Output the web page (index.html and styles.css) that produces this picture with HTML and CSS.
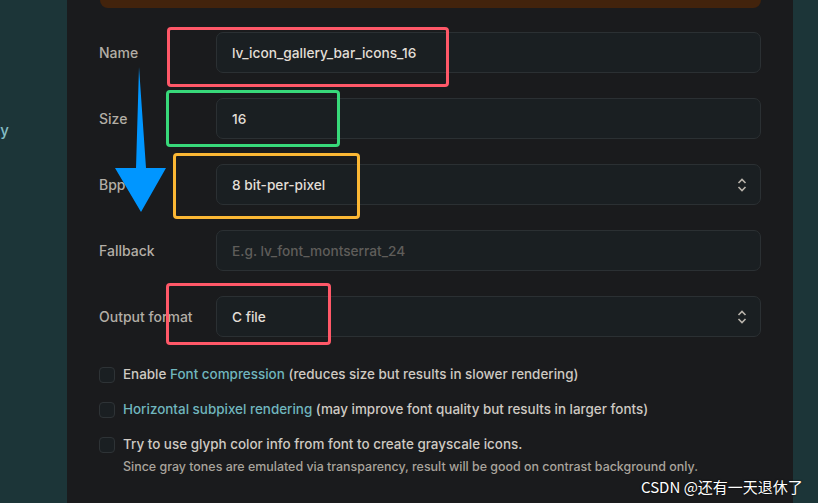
FILE: index.html
```html
<!DOCTYPE html>
<html lang="en">
<head>
  <meta charset="UTF-8">
  <meta name="viewport" content="width=device-width, initial-scale=1.0">
  <title>Font converter</title>
  <link rel="stylesheet" href="styles.css">
</head>
<body>

  <!-- Sidebar -->
  <div class="sidebar">
    <div class="nav-item">Icon gallery</div>
  </div>

  <!-- Main panel -->
  <div class="panel">
    <div class="banner"></div>

    <div class="form">
      <label class="label">Name</label>
      <div class="field">lv_icon_gallery_bar_icons_16</div>

      <label class="label">Size</label>
      <div class="field">16</div>

      <label class="label">Bpp</label>
      <div class="field select">
        <span>8 bit-per-pixel</span>
        <svg class="chevrons" width="10" height="14" viewBox="0 0 10 14"><path d="M1.5 5 L5 1.5 L8.5 5 M1.5 9 L5 12.5 L8.5 9" fill="none" stroke="#b9b4ac" stroke-width="1.6"/></svg>
      </div>

      <label class="label">Fallback</label>
      <div class="field placeholder">E.g. lv_font_montserrat_24</div>

      <label class="label">Output format</label>
      <div class="field select">
        <span>C file</span>
        <svg class="chevrons" width="10" height="14" viewBox="0 0 10 14"><path d="M1.5 5 L5 1.5 L8.5 5 M1.5 9 L5 12.5 L8.5 9" fill="none" stroke="#b9b4ac" stroke-width="1.6"/></svg>
      </div>
    </div>

    <div class="options">
      <div class="option">
        <span class="check"></span>
        <p>Enable <a href="#">Font compression</a> (reduces size but results in slower rendering)</p>
      </div>
      <div class="option">
        <span class="check"></span>
        <p><a href="#">Horizontal subpixel rendering</a> (may improve font quality but results in larger fonts)</p>
      </div>
      <div class="option">
        <span class="check"></span>
        <div>
          <p>Try to use glyph color info from font to create grayscale icons.</p>
          <p class="hint">Since gray tones are emulated via transparency, result will be good on contrast background only.</p>
        </div>
      </div>
    </div>

    <!-- Annotations drawn over the screenshot -->
    <div class="mark red" style="left: 100px; top: 27px; width: 282px; height: 60px;"></div>
    <div class="mark green" style="left: 99px; top: 90px; width: 174px; height: 57px;"></div>
    <div class="mark orange" style="left: 106px; top: 153px; width: 187px; height: 66px;"></div>
    <div class="mark red" style="left: 99px; top: 283px; width: 165px; height: 62px;"></div>

    <svg class="arrow" width="60" height="150" viewBox="0 0 60 150">
      <polygon points="24,0 21,101 0,101 26,145 51,101 31,101" fill="#0096ff"/>
    </svg>
  </div>

  <div class="rail"></div>

  <div class="watermark">CSDN @还有一天退休了</div>

</body>
</html>
```

FILE: styles.css
```css
body {
  margin: 0;
  display: flex;
  height: 503px;
  overflow: hidden;
  font-family: Inter, 'Noto Sans', sans-serif;
  background: #1a1b1d;
  color: #cfcac3;
}

.sidebar {
  width: 67px;
  flex-shrink: 0;
  background: #1c3538;
  overflow: hidden;
  display: flex;
  flex-direction: column;
  align-items: flex-end;
}

.sidebar .nav-item {
  margin-top: 121px;
  padding-right: 58px;
  font-size: 15px;
  font-weight: 500;
  line-height: 20px;
  white-space: nowrap;
  color: #84bec5;
}

.panel {
  position: relative;
  flex: 1;
  padding: 0 32px;
}

.banner {
  height: 8px;
  margin-left: 1px;
  background: #42230c;
  border-radius: 0 0 12px 12px;
}

.form {
  display: grid;
  grid-template-columns: 117px 1fr;
  row-gap: 25px;
  align-items: center;
  margin-top: 24px;
}

.label {
  font-size: 14px;
  font-weight: 500;
  color: #b3aea6;
}

.field {
  height: 41px;
  box-sizing: border-box;
  display: flex;
  align-items: center;
  justify-content: space-between;
  padding: 0 13px 0 15px;
  background: #1a1f22;
  border: 1px solid #2b3033;
  border-radius: 7px;
  font-size: 13.7px;
  font-weight: 500;
  color: #e2ded7;
}

.field.placeholder {
  color: #5f5d5a;
}

.options {
  margin-top: 27px;
  display: flex;
  flex-direction: column;
  gap: 15px;
}

.option {
  display: flex;
  gap: 8px;
  align-items: flex-start;
}

.option p {
  margin: 0;
  font-size: 13.45px;
  font-weight: 500;
  line-height: 20px;
  color: #cfcac3;
}

.option a {
  color: #70b6be;
  text-decoration: none;
}

.option p.hint {
  margin-top: 4px;
  font-size: 12.45px;
  line-height: 18px;
  color: #a9a49c;
}

.check {
  width: 16px;
  height: 16px;
  box-sizing: border-box;
  margin-top: 3px;
  flex-shrink: 0;
  background: #1a1f22;
  border: 1px solid #2e3336;
  border-radius: 4px;
}

.mark {
  position: absolute;
  box-sizing: border-box;
  border: 3px solid;
  border-radius: 4px;
}

.mark.red {
  border-color: #ff5868;
}

.mark.green {
  border-color: #38d97a;
}

.mark.orange {
  border-color: #fbb734;
}

.arrow {
  position: absolute;
  left: 48px;
  top: 67px;
}

.rail {
  width: 25px;
  flex-shrink: 0;
  background: #1c3538;
}

.watermark {
  position: absolute;
  left: 641px;
  top: 476px;
  font-family: 'Noto Sans CJK SC', sans-serif;
  font-size: 15px;
  color: #ffffff;
  text-shadow: 0 0 2px #000;
}
```
